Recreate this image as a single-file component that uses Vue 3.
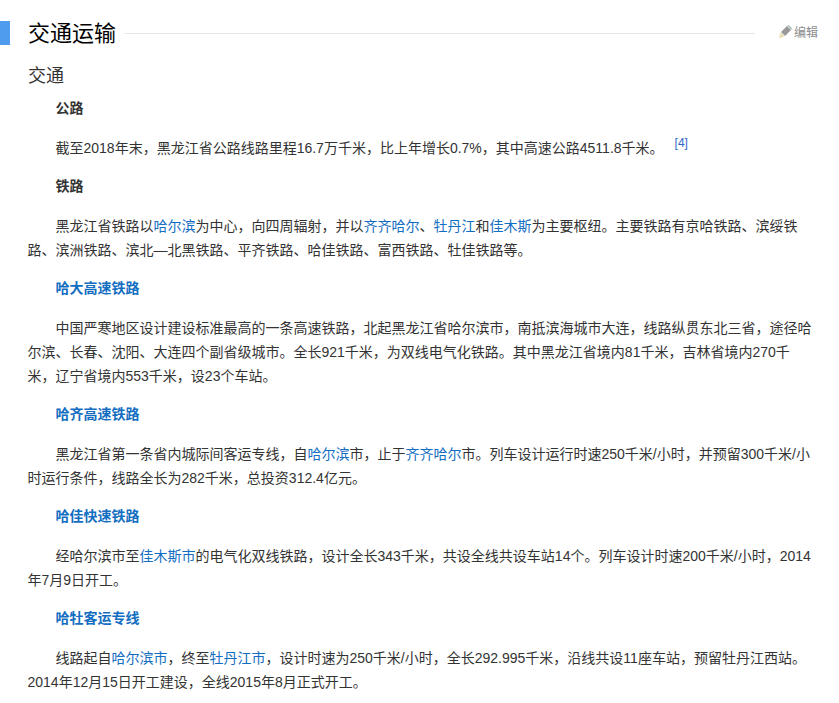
<script setup>
const blocks = [
  { h: '公路' },
  { p: [['截至2018年末,黑龙江省公路线路里程16.7万千米,比上年增长0.7%,其中高速公路4511.8千米。'], ['[4]', 's']] },
  { h: '铁路' },
  { p: [['黑龙江省铁路以'], ['哈尔滨', 'a'], ['为中心,向四周辐射,并以'], ['齐齐哈尔', 'a'], ['、'], ['牡丹江', 'a'], ['和'], ['佳木斯', 'a'], ['为主要枢纽。主要铁路有京哈铁路、滨绥铁路、滨洲铁路、滨北—北黑铁路、平齐铁路、哈佳铁路、富西铁路、牡佳铁路等。']] },
  { h: '哈大高速铁路', link: true },
  { p: [['中国严寒地区设计建设标准最高的一条高速铁路,北起黑龙江省哈尔滨市,南抵滨海城市大连,线路纵贯东北三省,途径哈尔滨、长春、沈阳、大连四个副省级城市。全长921千米,为双线电气化铁路。其中黑龙江省境内81千米,吉林省境内270千米,辽宁省境内553千米,设23个车站。']] },
  { h: '哈齐高速铁路', link: true },
  { p: [['黑龙江省第一条省内城际间客运专线,自'], ['哈尔滨', 'a'], ['市,止于'], ['齐齐哈尔', 'a'], ['市。列车设计运行时速250千米/小时,并预留300千米/小时运行条件,线路全长为282千米,总投资312.4亿元。']] },
  { h: '哈佳快速铁路', link: true },
  { p: [['经哈尔滨市至'], ['佳木斯市', 'a'], ['的电气化双线铁路,设计全长343千米,共设全线共设车站14个。列车设计时速200千米/小时,2014年7月9日开工。']] },
  { h: '哈牡客运专线', link: true },
  { p: [['线路起自'], ['哈尔滨市', 'a'], [',终至'], ['牡丹江市', 'a'], [',设计时速为250千米/小时,全长292.995千米,沿线共设11座车站,预留牡丹江西站。2014年12月15日开工建设,全线2015年8月正式开工。']] },
].map((b) => (b.p ? { ...b, p: b.p.map((r) => [r[0].replace(/,/g, '\uFF0C'), r[1]]) } : b))
</script>

<template>
  <div class="page">
    <div class="title-row">
      <div class="bar"></div>
      <h2 class="title">交通运输</h2>
      <div class="rule"></div>
      <div class="edit">
        <svg class="pen" width="13" height="13" viewBox="0 0 13 13">
          <path d="M2 7 8 1l4 4-6 6z" fill="#999" />
          <path d="M8.6.6 9.6 0 13 3.4l-.6 1z" fill="#8fb0a8" />
          <path d="M1.6 7.6 5.4 11.4 0 13z" fill="#e6dcae" />
        </svg>
        <span>编辑</span>
      </div>
    </div>
    <h3 class="sub">交通</h3>
    <div class="body">
      <template v-for="(b, i) in blocks" :key="i">
        <p v-if="b.h" class="head" :class="{ linked: b.link }">{{ b.h }}</p>
        <p v-else class="para">
          <template v-for="(r, j) in b.p" :key="j">
            <a v-if="r[1] === 'a'" class="link">{{ r[0] }}</a>
            <sup v-else-if="r[1] === 's'" class="ref">{{ r[0] }}</sup>
            <template v-else>{{ r[0] }}</template>
          </template>
        </p>
      </template>
    </div>
  </div>
</template>

<style scoped>
.page {
  width: 839px;
  height: 703px;
  overflow: hidden;
  background: #fff;
  font-family: "Liberation Sans", "Noto Sans CJK SC", sans-serif;
  color: #333;
  font-size: 14px;
}
.title-row {
  display: flex;
  align-items: center;
  height: 24px;
  padding-top: 21px;
}
.bar {
  width: 10px;
  height: 24px;
  background: #4f9cee;
  flex: none;
}
.title {
  margin: 2px 0 0 18px;
  font-size: 22px;
  font-weight: 400;
  line-height: 24px;
  color: #000;
  flex: none;
}
.rule {
  flex: none;
  width: 631px;
  height: 1px;
  margin: 0 0 0 8px;
  background: #e8e8e8;
}
.edit {
  display: flex;
  align-items: center;
  gap: 2px;
  margin: -3px 0 0 24px;
  font-size: 12px;
  color: #8c8c8c;
}
.pen {
  flex: none;
}
.sub {
  margin: 19px 0 0 28px;
  font-size: 18px;
  font-weight: 400;
  line-height: 24px;
  color: #333;
}
.body {
  margin: 8px 0 0 27.5px;
  width: 784px;
}
.head,
.para {
  margin: 0;
  text-indent: 2em;
  line-height: 24px;
}
.head {
  font-weight: 700;
  margin-bottom: 16px;
}
.head.linked {
  color: #136ec2;
}
.para {
  margin-bottom: 14px;
}
.link {
  color: #136ec2;
}
.ref {
  font-size: 12px;
  line-height: 0;
  color: #3366cc;
  margin-left: 11px;
  vertical-align: 6px;
}
</style>
